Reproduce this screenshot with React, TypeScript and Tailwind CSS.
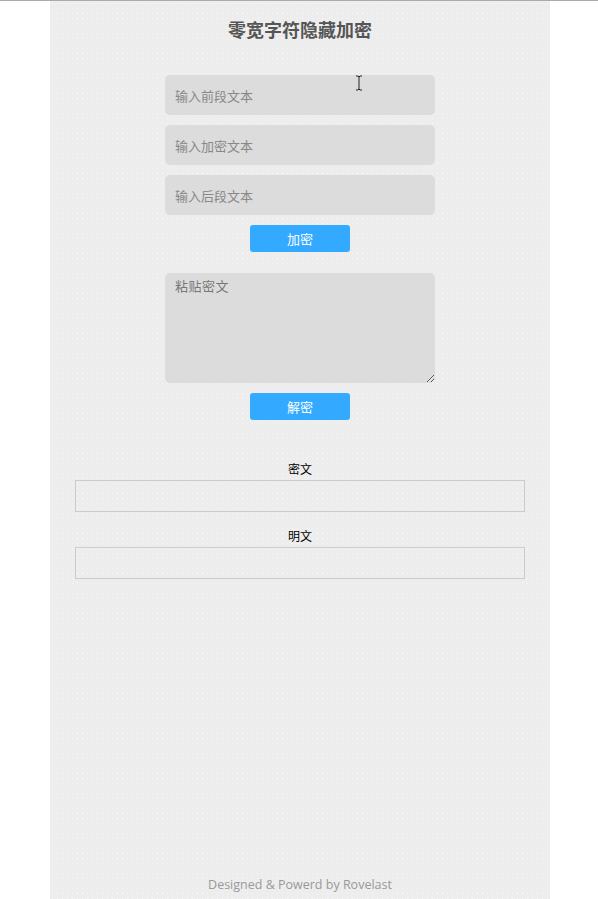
import { useState } from 'react';

const cjk = "font-['Microsoft_YaHei','Noto_Sans_CJK_SC',sans-serif]";

export default function App() {
  const [before, setBefore] = useState('');
  const [secret, setSecret] = useState('');
  const [after, setAfter] = useState('');
  const [pasted, setPasted] = useState('');

  return (
    <div className={`min-h-[899px] bg-white border-t border-[#aaa] flex ${cjk}`}>
      <div className="relative ml-[50px] w-[500px] min-h-[898px] bg-[#ededed] bg-[radial-gradient(circle,#f6f6f6_0.7px,transparent_1px)] bg-[length:5px_5px] flex flex-col items-center">
        <h1 className="mt-[18px] text-[18px] leading-[20px] font-bold text-[#555]">零宽字符隐藏加密</h1>

        {/* encrypt */}
        <div className="mt-[36px] flex flex-col gap-[10px]">
          <input
            value={before}
            onChange={(e) => setBefore(e.target.value)}
            placeholder="输入前段文本"
            className="w-[270px] h-10 rounded-[5px] bg-[#dcdcdc] px-[10px] text-[13px] text-[#333] placeholder:text-[#888] outline-none"
          />
          <input
            value={secret}
            onChange={(e) => setSecret(e.target.value)}
            placeholder="输入加密文本"
            className="w-[270px] h-10 rounded-[5px] bg-[#dcdcdc] px-[10px] text-[13px] text-[#333] placeholder:text-[#888] outline-none"
          />
          <input
            value={after}
            onChange={(e) => setAfter(e.target.value)}
            placeholder="输入后段文本"
            className="w-[270px] h-10 rounded-[5px] bg-[#dcdcdc] px-[10px] text-[13px] text-[#333] placeholder:text-[#888] outline-none"
          />
        </div>
        <button className="mt-[10px] w-[100px] h-[27px] rounded-[3px] bg-[#33aaff] text-white text-[13px]">加密</button>

        {/* decrypt */}
        <textarea
          value={pasted}
          onChange={(e) => setPasted(e.target.value)}
          placeholder="粘贴密文"
          className="mt-[21px] w-[270px] h-[110px] rounded-[5px] bg-[#dcdcdc] px-[10px] py-[3px] text-[13px] tracking-[0.5px] text-[#333] placeholder:text-[#777] outline-none"
        />
        <button className="mt-[10px] w-[100px] h-[27px] rounded-[3px] bg-[#33aaff] text-white text-[13px]">解密</button>

        {/* results */}
        <p className="mt-[41px] text-[12px] leading-[16px] text-black">密文</p>
        <div className="mt-[3px] w-[450px] h-[32px] border border-[#ccc]" />
        <p className="mt-[16px] text-[12px] leading-[16px] text-black">明文</p>
        <div className="mt-[3px] w-[450px] h-[32px] border border-[#ccc]" />

        <p className="mt-auto mb-[6px] text-[12.5px] leading-[16px] text-[#999] font-['Open_Sans','Noto_Sans',sans-serif]">
          Designed &amp; Powerd by Rovelast
        </p>

        {/* mouse cursor */}
        <svg className="absolute left-[305px] top-[74px]" width="8" height="16" viewBox="0 0 8 16">
          <path d="M1 1h2l1 1 1-1h2M4 2v12M1 15h2l1-1 1 1h2" stroke="#222" strokeWidth="1" fill="none" />
        </svg>
      </div>
    </div>
  );
}
